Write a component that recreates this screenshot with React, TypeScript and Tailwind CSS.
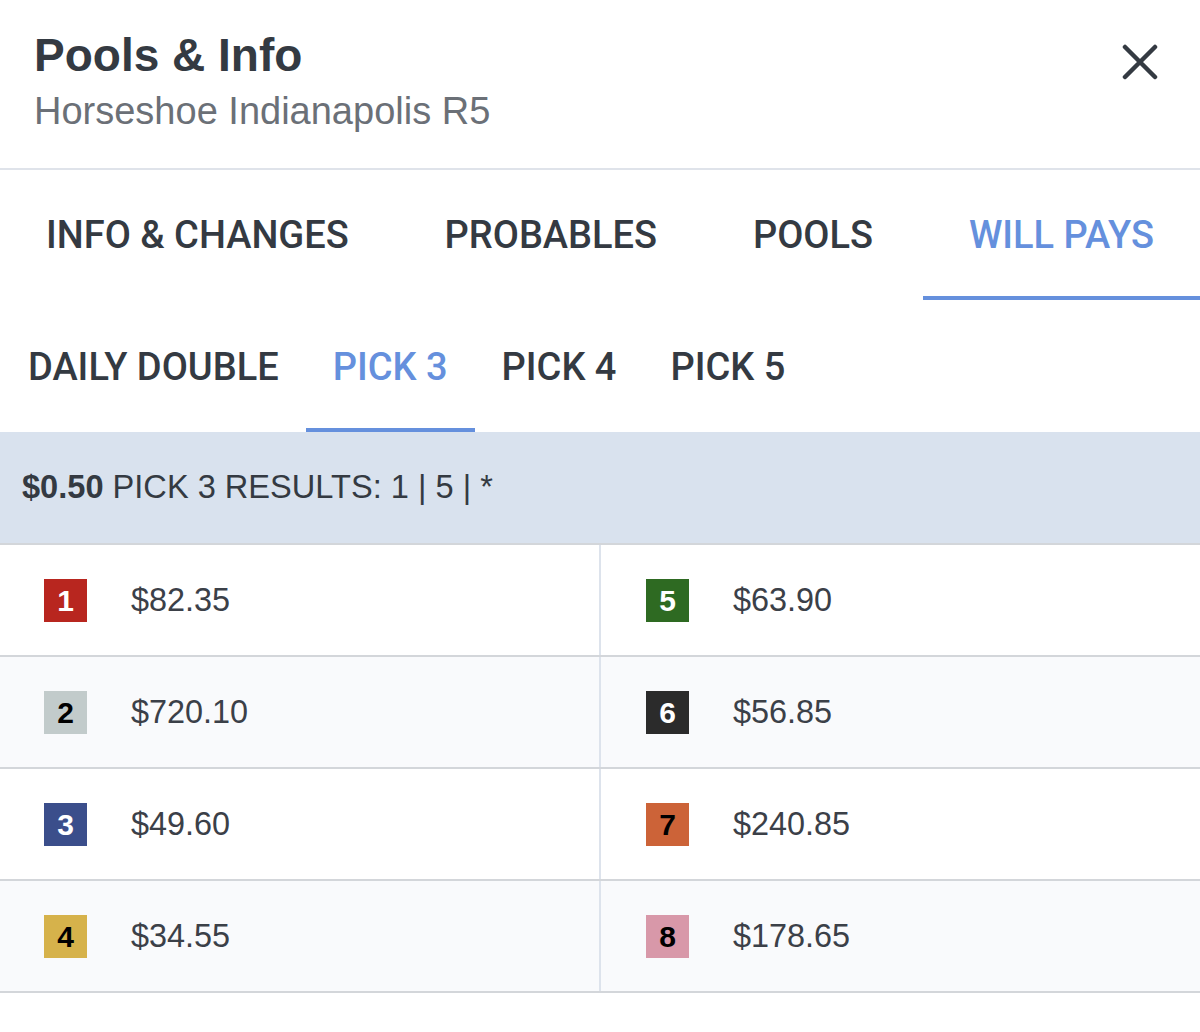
import React from "react";

const rows: { n: number; bg: string; fg: string; price: string }[][] = [
  [
    { n: 1, bg: "bg-[#b8261f]", fg: "text-white", price: "$82.35" },
    { n: 5, bg: "bg-[#2e6a22]", fg: "text-white", price: "$63.90" },
  ],
  [
    { n: 2, bg: "bg-[#c2cbcb]", fg: "text-black", price: "$720.10" },
    { n: 6, bg: "bg-[#2b2b2b]", fg: "text-white", price: "$56.85" },
  ],
  [
    { n: 3, bg: "bg-[#3b4e8b]", fg: "text-white", price: "$49.60" },
    { n: 7, bg: "bg-[#cc6338]", fg: "text-black", price: "$240.85" },
  ],
  [
    { n: 4, bg: "bg-[#d6b24b]", fg: "text-black", price: "$34.55" },
    { n: 8, bg: "bg-[#d898a9]", fg: "text-black", price: "$178.65" },
  ],
];

const topTabs = ["INFO & CHANGES", "PROBABLES", "POOLS", "WILL PAYS"];
const subTabs = ["DAILY DOUBLE", "PICK 3", "PICK 4", "PICK 5"];

export default function App() {
  return (
    <div className="w-[1200px] h-[1032px] bg-white overflow-hidden font-['Liberation_Sans',Arial,sans-serif]">
      {/* Header */}
      <div className="h-[168px] flex items-start justify-between pl-[34px] pr-[42px] pt-[27px]">
        <div className="flex flex-col">
          <div className="text-[46px] leading-[56px] font-bold text-[#343a42]">Pools &amp; Info</div>
          <div className="text-[38px] leading-[56px] text-[#6b7077]">Horseshoe Indianapolis R5</div>
        </div>
        <button className="mt-[17px] w-[36px] h-[36px] flex items-center justify-center">
          <svg width="36" height="36" viewBox="0 0 36 36">
            <path d="M3 3 L33 33 M33 3 L3 33" stroke="#343a42" strokeWidth="4.5" strokeLinecap="round" />
          </svg>
        </button>
      </div>
      <div className="h-[2px] bg-[#dfe3ea]" />

      {/* Top tabs */}
      <div className="flex justify-between h-[130px] font-['Roboto',sans-serif] font-medium text-[38px]">
        {topTabs.map((t, i) => {
          const active = i === 3;
          return (
            <div
              key={t}
              className={`px-[46px] flex items-center justify-center border-b-4 ${
                active ? "border-[#6590dd] text-[#6590dd]" : "border-transparent text-[#343a42]"
              }`}
            >
              <span className="pt-[4px]">{t}</span>
            </div>
          );
        })}
      </div>

      {/* Sub tabs */}
      <div className="flex h-[132px] pl-[1px] font-['Roboto',sans-serif] font-medium text-[38px]">
        {subTabs.map((t, i) => {
          const active = i === 1;
          return (
            <div
              key={t}
              className={`px-[27px] flex items-center justify-center border-b-4 ${
                active ? "border-[#6590dd] text-[#6590dd]" : "border-transparent text-[#343a42]"
              }`}
            >
              <span className="pt-[6px]">{t}</span>
            </div>
          );
        })}
      </div>

      {/* Banner */}
      <div className="h-[111px] bg-[#d9e2ee] flex items-center pl-[22px] text-[32.6px] text-[#343a42]">
        <span className="font-bold">$0.50</span>
        <span>&nbsp;PICK 3 RESULTS: 1 | 5 | *</span>
      </div>

      {/* Grid */}
      <div className="border-t-2 border-[#d3d6da]">
        {rows.map((row, ri) => (
          <div
            key={ri}
            className={`grid grid-cols-[599px_2px_599px] h-[112px] border-b-2 border-[#d3d6da] ${
              ri % 2 === 1 ? "bg-[#f9fafc]" : "bg-white"
            }`}
          >
            {row.map((c, ci) => (
              <React.Fragment key={c.n}>
                {ci === 1 && <div className="bg-[#dde3ec]" />}
                <div className={`flex items-center ${ci === 0 ? "pl-[44px]" : "pl-[45px]"}`}>
                  <div
                    className={`w-[43px] h-[43px] flex items-center justify-center ${c.bg} ${c.fg} font-bold text-[30px]`}
                  >
                    {c.n}
                  </div>
                  <div className="ml-[44px] text-[32.4px] text-[#3b4048]">{c.price}</div>
                </div>
              </React.Fragment>
            ))}
          </div>
        ))}
      </div>
    </div>
  );
}
